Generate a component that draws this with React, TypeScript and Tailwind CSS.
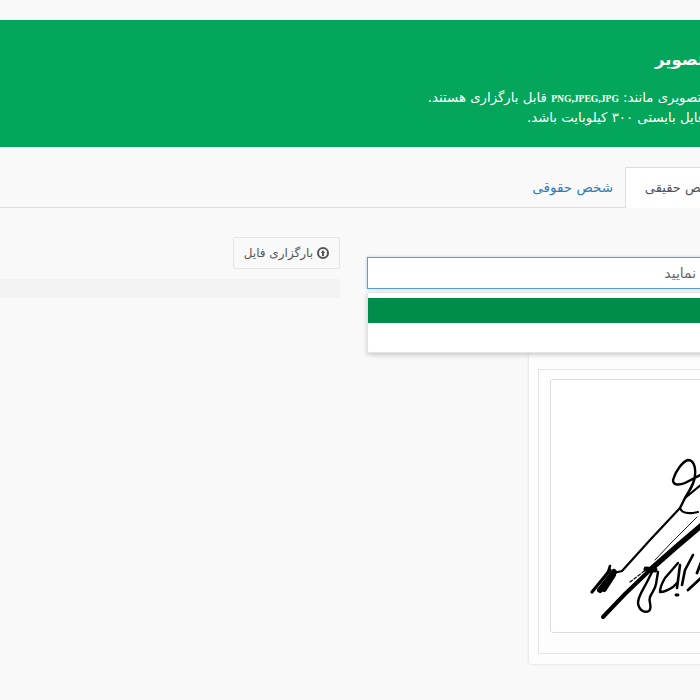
const persian = "font-['DejaVu_Sans',sans-serif]";

function Signature() {
  return (
    <svg width="300" height="252" viewBox="551 380 300 252" fill="none" stroke="black" strokeLinecap="round" strokeLinejoin="round">
      {/* long strokes */}
      <path d="M614 573 L622 571 L650 540 L680 508" strokeWidth="2.2" />
      <path d="M603 617 L625 594 L648 572" strokeWidth="4" />
      <path d="M650 570 L675 548 L702 525" strokeWidth="5.5" />
      <path d="M655 560 L672 542 L697 517" strokeWidth="0.9" />
      <path d="M630 582 L647 569" strokeWidth="1.2" strokeDasharray="3 2" />
      <path d="M646 569 L655 570" strokeWidth="5" />
      {/* hatched start */}
      <path d="M592 592 L610 570" strokeWidth="3.2" />
      <path d="M600 590 L614 572" strokeWidth="6" />
      <path d="M604 589 L613 575" strokeWidth="6" />
      <path d="M610 566 L608 572" strokeWidth="2.5" />
      {/* top loop */}
      <path d="M680 508 L685 498 C690 490 695 482 695 475 C696 466 693 460 688 460 C682 462 675 472 673 480 C673 486 680 485 685 483 L702 474" strokeWidth="2.4" />
      <path d="M680 508 C681 511 683 514 693 513 L698 512 M685 498 L702 484" strokeWidth="2.2" />
      {/* lower loop */}
      <path d="M653 570 L647 582 C643 590 638 596 638 603 C639 611 645 613 649 611 C653 607 648 602 650 597 C652 592 655 590 656 584 L658 572" strokeWidth="2.4" />
      {/* small letters */}
      <path d="M678 563 L665 578 C662 583 660 588 660 592 C664 592 670 589 673 587 L678 582" strokeWidth="2.4" />
      <path d="M680 565 L677 588" strokeWidth="2.6" />
      <path d="M676 595 L678 595" strokeWidth="2.8" />
      <path d="M693 555 L685 570 L682 585" strokeWidth="2.6" />
      <path d="M702 560 L697 573" strokeWidth="2.8" />
      <path d="M702 577 L688 590" strokeWidth="2.8" />
    </svg>
  );
}

export default function App() {
  return (
    <div dir="ltr" className={`w-[700px] h-[700px] overflow-hidden bg-[#f9f9f9] pt-5 ${persian}`}>
      <div dir="rtl" className="w-[1000px]">
        <div className="h-[127px] bg-[#03a65a] text-white pt-[22px]">
          <h1 className="text-[16.5px] font-bold leading-[36px] mb-[10px] pr-[218px]">بارگزاری تصویر</h1>
          <p className="text-[13.3px] leading-[19px] pr-[235px]">فرمت های تصویری مانند: <b className="text-[9.6px] font-['Liberation_Serif',serif]">PNG,JPEG,JPG</b> قابل بارگزاری هستند.</p>
          <p className="text-[13.3px] leading-[19px] pr-[266px]">حجم فایل بایستی ۳۰۰ کیلوبایت باشد.</p>
        </div>

        <div className="mt-5 h-[41px] border-b border-[#dddddd] flex pr-[260px]">
          <div className="h-[41px] w-[115px] bg-white border border-[#dddddd] border-b-0 flex items-center justify-center text-[13px] text-[#555555]">شخص حقیقی</div>
          <div className="h-10 px-3 flex items-center text-[13.5px] text-[#337ab7]">شخص حقوقی</div>
        </div>

        <div className="flex mt-[29px]">
          <div className="relative w-[633px] shrink-0 pt-[20px]">
            <div className="h-8 border border-[#5b9fd0] bg-white shadow-[0_0_3px_rgba(102,175,233,0.5)] flex items-center pr-[260px] text-[14px] text-[#666666]">انتخاب نمایید</div>
            <div className="absolute top-[55px] left-0 right-0 h-[61px] pt-[5px] bg-white rounded-[2px] border border-[#e4e4e4] shadow-[0_2px_5px_rgba(0,0,0,0.2)] z-10">
              <div className="h-[25px] bg-[#008c4a]" />
            </div>
            <div className="mt-[64px] w-[471px] h-[311px] bg-[#fdfdfd] rounded-[3px] shadow-[0_0_3px_rgba(0,0,0,0.15)] pt-[16px] pb-[10px] pl-[9px]">
              <div className="h-[285px] border border-[#e5e5e5] pt-[9px] pl-[11px]">
                <div className="h-[254px] bg-white border border-[#dddddd] rounded-[3px]" dir="ltr">
                  <Signature />
                </div>
              </div>
            </div>
          </div>
          <div className="w-[27px] shrink-0" />
          <div className="w-[340px] shrink-0">
            <div className="w-[107px] h-8 bg-[#f9f9f9] border border-[#e5e5e5] flex items-center pr-[10px] gap-[4px] text-[12px] text-[#555555] rounded-[2px]">
              <svg width="12" height="12" viewBox="0 0 12 12" className="shrink-0">
                <circle cx="6" cy="6" r="5" fill="none" stroke="#555555" strokeWidth="2" />
                <path d="M6 3 L8.2 6 H7 V9 H5 V6 H3.8 Z" fill="#555555" />
              </svg>
              <span className="whitespace-nowrap">بارگزاری فایل</span>
            </div>
            <div className="mt-[10px] h-[19px] bg-[#f3f3f3] rounded-[2px]" />
          </div>
        </div>
      </div>
    </div>
  );
}
